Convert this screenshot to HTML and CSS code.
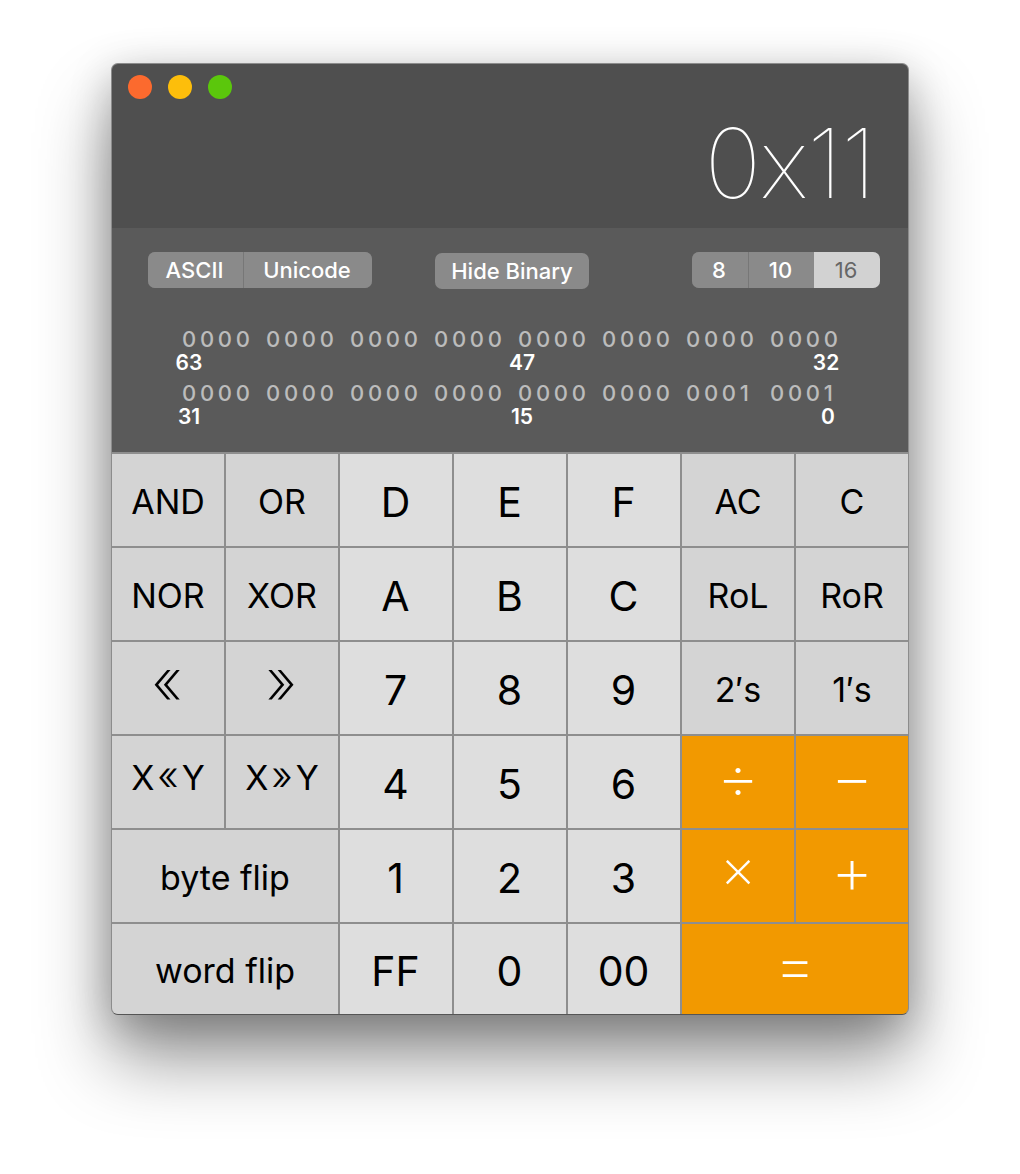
FILE: index.html
```html
<!DOCTYPE html>
<html lang="en">
<head>
  <meta charset="UTF-8">
  <title>Programmer Calculator</title>
  <link rel="stylesheet" href="styles.css">
</head>
<body>
  <div class="window">
    <header class="display">
      <div class="lights">
        <span class="light red"></span>
        <span class="light yellow"></span>
        <span class="light green"></span>
      </div>
      <div class="value">0x11</div>
    </header>

    <section class="panel">
      <div class="controls">
        <div class="segment">
          <button class="seg seg-ascii">ASCII</button>
          <button class="seg seg-unicode">Unicode</button>
        </div>
        <button class="hide-binary">Hide Binary</button>
        <div class="segment">
          <button class="seg seg-8">8</button>
          <button class="seg seg-10">10</button>
          <button class="seg seg-16 active">16</button>
        </div>
      </div>

      <div class="bits">
        <div class="bit-row">
          <span>0000</span><span>0000</span><span>0000</span><span>0000</span>
          <span>0000</span><span>0000</span><span>0000</span><span>0000</span>
        </div>
        <div class="bit-labels"><span>63</span><span>47</span><span>32</span></div>
        <div class="bit-row">
          <span>0000</span><span>0000</span><span>0000</span><span>0000</span>
          <span>0000</span><span>0000</span><span>0001</span><span>0001</span>
        </div>
        <div class="bit-labels"><span>31</span><span>15</span><span class="bit-zero">0</span></div>
      </div>
    </section>

    <section class="keys">
      <button class="key fn">AND</button>
      <button class="key fn">OR</button>
      <button class="key num">D</button>
      <button class="key num">E</button>
      <button class="key num">F</button>
      <button class="key fn">AC</button>
      <button class="key fn">C</button>

      <button class="key fn">NOR</button>
      <button class="key fn">XOR</button>
      <button class="key num">A</button>
      <button class="key num">B</button>
      <button class="key num">C</button>
      <button class="key fn">RoL</button>
      <button class="key fn">RoR</button>

      <button class="key fn shift">«</button>
      <button class="key fn shift">»</button>
      <button class="key num">7</button>
      <button class="key num">8</button>
      <button class="key num">9</button>
      <button class="key fn">2′s</button>
      <button class="key fn">1′s</button>

      <button class="key fn shift-xy">X<span class="mini">«</span>Y</button>
      <button class="key fn shift-xy">X<span class="mini">»</span>Y</button>
      <button class="key num">4</button>
      <button class="key num">5</button>
      <button class="key num">6</button>
      <button class="key op">÷</button>
      <button class="key op">−</button>

      <button class="key fn wide">byte flip</button>
      <button class="key num">1</button>
      <button class="key num">2</button>
      <button class="key num">3</button>
      <button class="key op op-times">×</button>
      <button class="key op op-plus">+</button>

      <button class="key fn wide">word flip</button>
      <button class="key num">FF</button>
      <button class="key num">0</button>
      <button class="key num">00</button>
      <button class="key op wide">=</button>
    </section>
  </div>
</body>
</html>
```

FILE: styles.css
```css
html, body { margin: 0; height: 100%; background: #fff; overflow: hidden; }
body { font-family: Inter, "Liberation Sans", sans-serif; padding: 63px 0 0 111px; box-sizing: border-box; }
button { font-family: inherit; border: 0; padding: 0; margin: 0; }

.window { width: 798px; box-sizing: border-box; border: 1px solid #8c8c8c; border-bottom-color: #555; border-radius: 7px; overflow: hidden; background: #8e8e8e; box-shadow: 0 44px 72px rgba(0,0,0,0.42), 0 10px 42px rgba(0,0,0,0.22); }

.display { height: 164px; box-sizing: border-box; background: #4f4f4f; padding: 11px 33px 0 16px; }
.lights { display: flex; gap: 16px; }
.light { width: 24px; height: 24px; border-radius: 50%; }
.red { background: #fc6a2e; }
.yellow { background: #fdbe0b; }
.green { background: #5bc70c; }
.value { color: #fff; font-weight: 100; font-size: 96px; line-height: 116px; text-align: right; letter-spacing: -1.2px; margin-top: 6px; }

.panel { height: 224px; box-sizing: border-box; background: #5a5a5a; padding: 24px 28px 0 36px; }
.controls { display: flex; align-items: flex-start; }
.segment { display: flex; height: 36px; border-radius: 7px; overflow: hidden; gap: 1px; background: #777; }
.seg { background: #8a8a8a; color: #fff; font-size: 22px; font-weight: 500; height: 36px; padding-right: 2px; }
.seg-ascii { width: 95px; }
.seg-unicode { width: 128px; }
.seg-8 { width: 56px; }
.seg-10 { width: 65px; }
.seg-16 { width: 66px; }
.seg.active { background: #d2d2d2; color: #666; font-weight: 400; margin-left: -1px; }
.hide-binary { width: 154px; height: 36px; margin: 1px auto 0 63px; background: #8a8a8a; color: #fff; font-size: 22px; font-weight: 500; border-radius: 7px; }

.bits { margin: 37px 0 0 27px; }
.bit-row { display: grid; grid-template-columns: repeat(8, 84px); height: 27px; margin-left: 7px; color: #bcbcbc; font-size: 22px; font-weight: 500; line-height: 27px; letter-spacing: 3.7px; }
.bit-labels { display: grid; grid-template-columns: 333px 1fr 28px; width: 665px; height: 27px; color: #fff; font-size: 21px; font-weight: 600; line-height: 19px; text-align: center; }
.bit-labels span { width: 28px; }
.bit-labels .bit-zero { width: 32px; }

.keys { display: grid; grid-template-columns: repeat(7, 112px); grid-template-rows: repeat(5, 92px) 90px; gap: 2px; padding-top: 2px; }
.key { color: #000; padding-top: 4px; }
.fn { background: #d4d4d4; font-size: 34px; padding-top: 2px; }
.num { background: #dedede; font-size: 41px; padding-right: 1px; }
.op { background: #f29900; color: #fff; font-size: 66px; font-weight: 250; padding-top: 0; padding-bottom: 20px; }
.op-times { font-size: 56px; padding-bottom: 16px; }
.op-plus { padding-bottom: 24px; }
.wide { grid-column: span 2; }
.shift { font-size: 64px; font-weight: 200; padding-top: 0; padding-bottom: 18px; padding-right: 2px; }
.shift-xy { padding-top: 0; padding-bottom: 14px; white-space: nowrap; }
.mini { font-size: 40px; font-weight: 300; margin: 0 3px; }
```
